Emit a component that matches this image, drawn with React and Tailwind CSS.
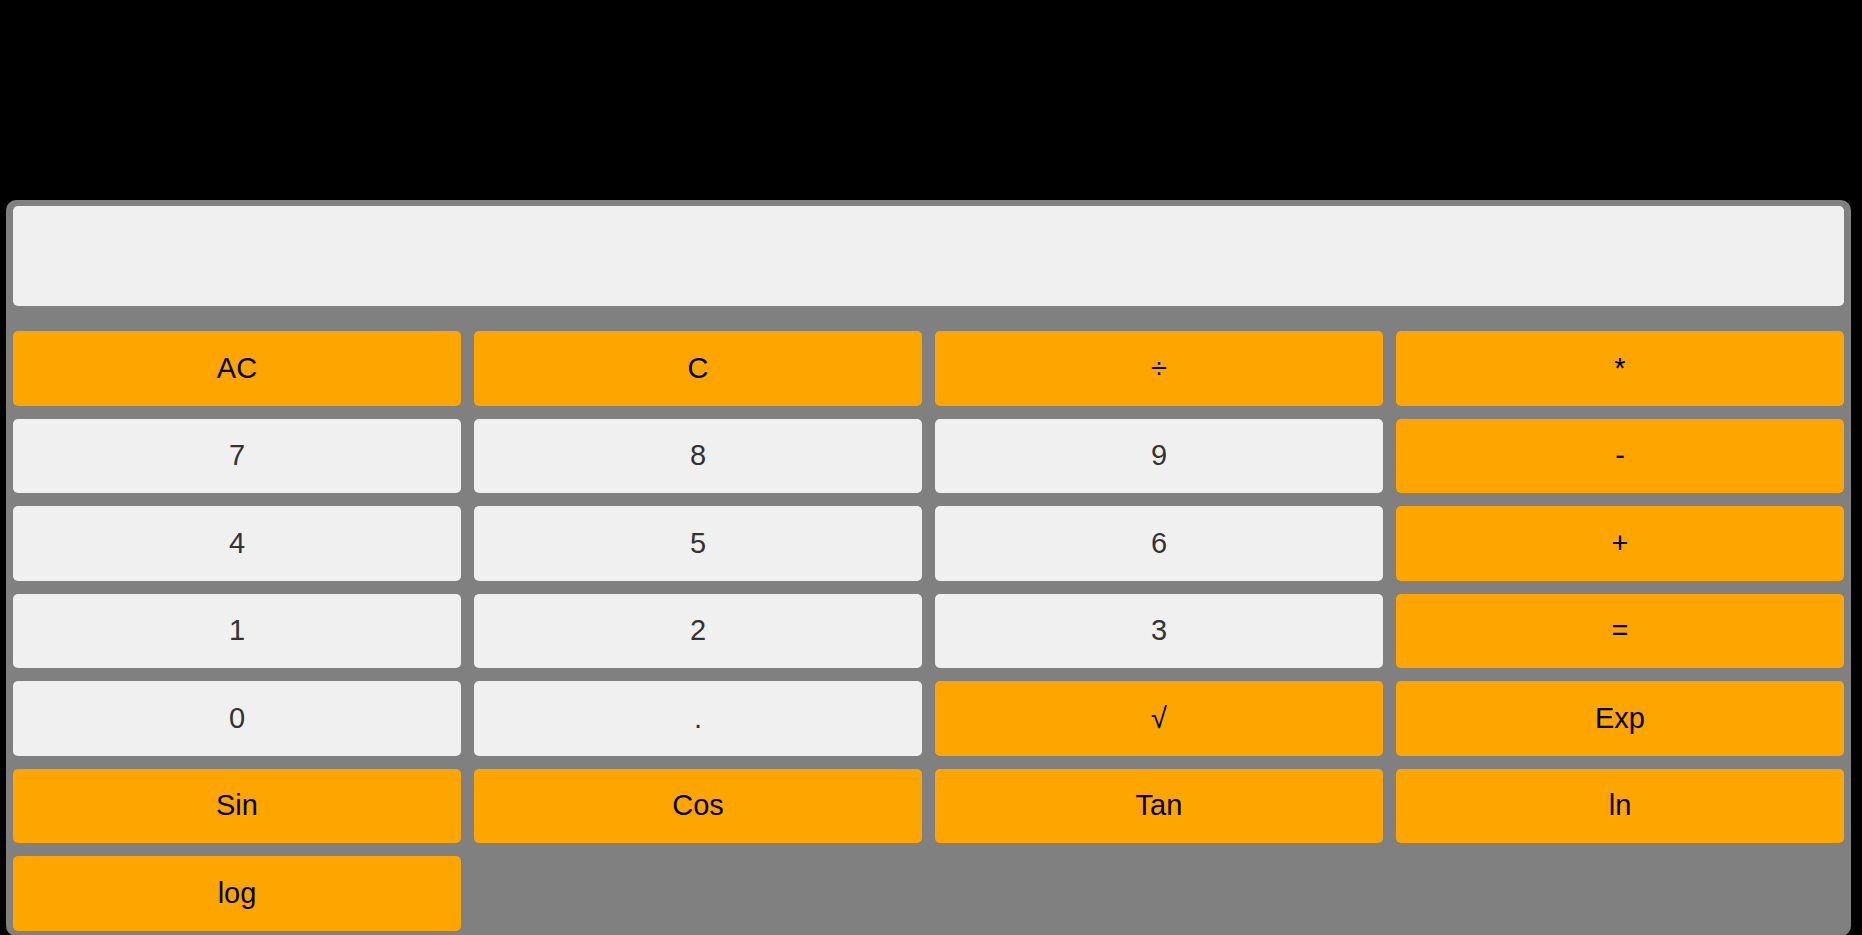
const keys = [
  { label: 'AC', op: true },
  { label: 'C', op: true },
  { label: '÷', op: true },
  { label: '*', op: true },
  { label: '7' },
  { label: '8' },
  { label: '9' },
  { label: '-', op: true },
  { label: '4' },
  { label: '5' },
  { label: '6' },
  { label: '+', op: true },
  { label: '1' },
  { label: '2' },
  { label: '3' },
  { label: '=', op: true },
  { label: '0' },
  { label: '.' },
  { label: '√', op: true },
  { label: 'Exp', op: true },
  { label: 'Sin', op: true },
  { label: 'Cos', op: true },
  { label: 'Tan', op: true },
  { label: 'ln', op: true },
  { label: 'log', op: true },
]

const App = () => {
  return (
    <div className="h-[935px] overflow-hidden bg-black pt-[200px] font-['Liberation_Sans',Arial,sans-serif]">
      <div className="ml-[6px] w-[1845px] rounded-[10px] bg-[#808080] px-[7px] pt-[6px] pb-[5px]">
        <div className="h-[100px] rounded-[5px] bg-[#f0f0f0]" />
        <div className="mt-[25px] grid grid-cols-4 auto-rows-[74.5px] gap-[13px]">
          {keys.map((k) => (
            <button
              key={k.label}
              className={
                k.op
                  ? 'flex items-center justify-center rounded-[5px] bg-[#ffa500] text-[29px] text-black'
                  : 'flex items-center justify-center rounded-[5px] bg-[#f0f0f0] text-[29px] text-[#333333]'
              }
            >
              {k.label}
            </button>
          ))}
        </div>
      </div>
    </div>
  )
}

export default App
